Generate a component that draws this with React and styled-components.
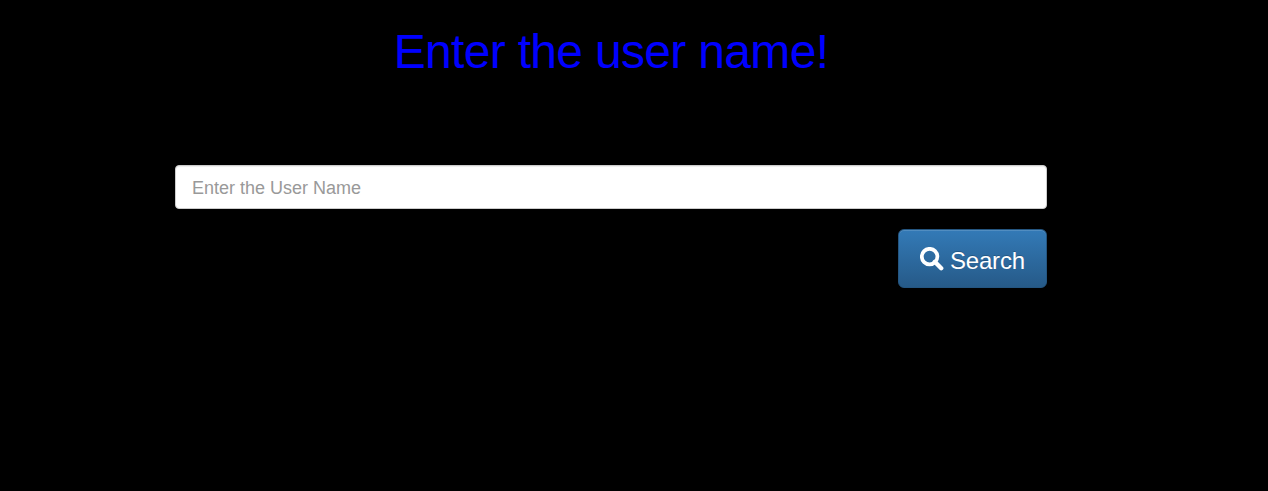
import React from 'react';
import styled, { createGlobalStyle } from 'styled-components';

const GlobalStyle = createGlobalStyle`
  *, *::before, *::after { box-sizing: border-box; }
  body {
    margin: 0;
    background: #000;
    font-family: "Liberation Sans", Arial, sans-serif;
  }
`;

const Page = styled.main`
  width: 872px;
  min-height: 491px;
  margin-left: 175px;
  padding-top: 25px;
`;

const Title = styled.h1`
  margin: 0 0 87px;
  color: #00f;
  font-size: 48px;
  font-weight: 400;
  letter-spacing: -0.68px;
  line-height: 53px;
  text-align: center;
`;

const SearchForm = styled.form`
  display: flex;
  flex-direction: column;
  align-items: flex-end;
  gap: 20px;
`;

const UserInput = styled.input`
  width: 100%;
  height: 44px;
  padding: 12px 16px 10px;
  border: 1px solid #ccc;
  border-radius: 4px;
  background: #fff;
  box-shadow: inset 0 1px 1px rgba(0, 0, 0, 0.075);
  color: #555;
  font-family: inherit;
  font-size: 18px;
  outline: none;
  &::placeholder { color: #999; opacity: 1; }
`;

const SearchButton = styled.button`
  display: flex;
  align-items: center;
  gap: 6px;
  width: 149px;
  height: 59px;
  padding: 5px 20px 0 21px;
  border: 1px solid #245580;
  border-radius: 6px;
  background: linear-gradient(to bottom, #337ab7, #265a88);
  box-shadow: inset 0 1px 0 rgba(255, 255, 255, 0.15), 0 1px 1px rgba(0, 0, 0, 0.075);
  color: #fff;
  font-family: inherit;
  font-size: 24px;
  letter-spacing: -0.2px;
  line-height: 32px;
  text-shadow: 0 -1px 0 rgba(0, 0, 0, 0.2);
`;

const SearchIcon = styled.svg`
  width: 24px;
  height: 24px;
  flex: none;
  margin-top: -5px;
`;

export default function App() {
  return (
    <>
      <GlobalStyle />
      <Page>
        <Title>Enter the user name!</Title>
        <SearchForm onSubmit={(e) => e.preventDefault()}>
          <UserInput type="text" placeholder="Enter the User Name" />
          <SearchButton type="submit">
            <SearchIcon viewBox="0 0 24 24" fill="none" stroke="#fff" aria-hidden="true">
              <circle cx="9.6" cy="9.6" r="7.8" strokeWidth="3.7" />
              <path d="M14.8 14.8l6.4 6.4" strokeWidth="4.4" strokeLinecap="round" />
            </SearchIcon>
            <span>Search</span>
          </SearchButton>
        </SearchForm>
      </Page>
    </>
  );
}
